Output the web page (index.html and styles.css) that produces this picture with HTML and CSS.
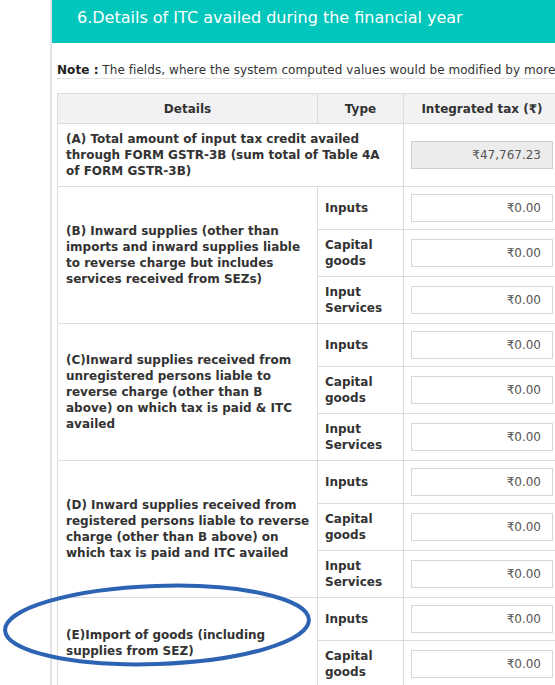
FILE: index.html
```html
<!DOCTYPE html>
<html lang="en">
<head>
  <meta charset="UTF-8">
  <title>GSTR-9 Table 6</title>
  <link rel="stylesheet" href="styles.css">
</head>
<body>
  <div class="itc-section">
    <div class="itc-head">
      <h4>6.Details of ITC availed during the financial year</h4>
    </div>
    <div class="itc-body">
      <p class="itc-note"><strong>Note :</strong> The fields, where the system computed values would be modified by more than 20% would be highlighted in red colour.</p>
      <table class="itc-table">
        <thead>
          <tr>
            <th class="col-details">Details</th>
            <th class="col-type">Type</th>
            <th class="col-amt">Integrated tax (&#8377;)</th>
            <th class="col-amt">Central tax (&#8377;)</th>
            <th class="col-amt">State/UT tax (&#8377;)</th>
            <th class="col-amt">Cess (&#8377;)</th>
          </tr>
        </thead>
        <tbody>
          <!-- A -->
          <tr>
            <td colspan="2" class="row-a">(A) Total amount of input tax credit availed through FORM GSTR-3B (sum total of Table 4A of FORM GSTR-3B)</td>
            <td><input class="amt amt-readonly" value="&#8377;47,767.23" readonly></td>
            <td><input class="amt amt-readonly" value="&#8377;47,767.23" readonly></td>
            <td><input class="amt amt-readonly" value="&#8377;47,767.23" readonly></td>
            <td><input class="amt amt-readonly" value="&#8377;0.00" readonly></td>
          </tr>
          <!-- B -->
          <tr>
            <td rowspan="3" class="row-label">(B) Inward supplies (other than imports and inward supplies liable to reverse charge but includes services received from SEZs)</td>
            <td class="type">Inputs</td>
            <td><input class="amt" value="&#8377;0.00"></td>
            <td><input class="amt" value="&#8377;0.00"></td>
            <td><input class="amt" value="&#8377;0.00"></td>
            <td><input class="amt" value="&#8377;0.00"></td>
          </tr>
          <tr>
            <td class="type">Capital goods</td>
            <td><input class="amt" value="&#8377;0.00"></td>
            <td><input class="amt" value="&#8377;0.00"></td>
            <td><input class="amt" value="&#8377;0.00"></td>
            <td><input class="amt" value="&#8377;0.00"></td>
          </tr>
          <tr>
            <td class="type">Input Services</td>
            <td><input class="amt" value="&#8377;0.00"></td>
            <td><input class="amt" value="&#8377;0.00"></td>
            <td><input class="amt" value="&#8377;0.00"></td>
            <td><input class="amt" value="&#8377;0.00"></td>
          </tr>
          <!-- C -->
          <tr>
            <td rowspan="3" class="row-label">(C)Inward supplies received from unregistered persons liable to reverse charge (other than B above) on which tax is paid &amp; ITC availed</td>
            <td class="type">Inputs</td>
            <td><input class="amt" value="&#8377;0.00"></td>
            <td><input class="amt" value="&#8377;0.00"></td>
            <td><input class="amt" value="&#8377;0.00"></td>
            <td><input class="amt" value="&#8377;0.00"></td>
          </tr>
          <tr>
            <td class="type">Capital goods</td>
            <td><input class="amt" value="&#8377;0.00"></td>
            <td><input class="amt" value="&#8377;0.00"></td>
            <td><input class="amt" value="&#8377;0.00"></td>
            <td><input class="amt" value="&#8377;0.00"></td>
          </tr>
          <tr>
            <td class="type">Input Services</td>
            <td><input class="amt" value="&#8377;0.00"></td>
            <td><input class="amt" value="&#8377;0.00"></td>
            <td><input class="amt" value="&#8377;0.00"></td>
            <td><input class="amt" value="&#8377;0.00"></td>
          </tr>
          <!-- D -->
          <tr>
            <td rowspan="3" class="row-label">(D) Inward supplies received from registered persons liable to reverse charge (other than B above) on which tax is paid and ITC availed</td>
            <td class="type">Inputs</td>
            <td><input class="amt" value="&#8377;0.00"></td>
            <td><input class="amt" value="&#8377;0.00"></td>
            <td><input class="amt" value="&#8377;0.00"></td>
            <td><input class="amt" value="&#8377;0.00"></td>
          </tr>
          <tr>
            <td class="type">Capital goods</td>
            <td><input class="amt" value="&#8377;0.00"></td>
            <td><input class="amt" value="&#8377;0.00"></td>
            <td><input class="amt" value="&#8377;0.00"></td>
            <td><input class="amt" value="&#8377;0.00"></td>
          </tr>
          <tr>
            <td class="type">Input Services</td>
            <td><input class="amt" value="&#8377;0.00"></td>
            <td><input class="amt" value="&#8377;0.00"></td>
            <td><input class="amt" value="&#8377;0.00"></td>
            <td><input class="amt" value="&#8377;0.00"></td>
          </tr>
          <!-- E -->
          <tr>
            <td rowspan="2" class="row-label">(E)Import of goods (including supplies from SEZ)</td>
            <td class="type">Inputs</td>
            <td><input class="amt" value="&#8377;0.00"></td>
            <td><input class="amt" value="&#8377;0.00"></td>
            <td><input class="amt" value="&#8377;0.00"></td>
            <td><input class="amt" value="&#8377;0.00"></td>
          </tr>
          <tr>
            <td class="type">Capital goods</td>
            <td><input class="amt" value="&#8377;0.00"></td>
            <td><input class="amt" value="&#8377;0.00"></td>
            <td><input class="amt" value="&#8377;0.00"></td>
            <td><input class="amt" value="&#8377;0.00"></td>
          </tr>
        </tbody>
      </table>
    </div>
  </div>

  <!-- hand-drawn highlight over row E -->
  <svg class="mark" width="555" height="685" viewBox="0 0 555 685" aria-hidden="true">
    <ellipse cx="157" cy="625" rx="152" ry="39" transform="rotate(-2 157 625)" fill="none" stroke="#2d63b3" stroke-width="4"/>
  </svg>
</body>
</html>
```

FILE: styles.css
```css
html, body { overflow: hidden; }
body {
  margin: 0;
  background: #fff;
  font-family: 'DejaVu Sans', Verdana, sans-serif;
  color: #333;
}
.itc-section {
  margin-left: 50px;
  border-left: 2px solid #dfe4ea;
  min-height: 685px;
  width: 990px;
}
.itc-head {
  background: #00c6bb;
  height: 43px;
  padding-left: 25px;
  display: flex;
  align-items: center;
}
.itc-head h4 {
  margin: 0 0 8px 0;
  color: #fff;
  font-size: 16px;
  font-weight: 400;
  white-space: nowrap;
}
.itc-body {
  padding: 20px 0 0 5px;
}
.itc-note {
  margin: 0 0 14px 0;
  font-size: 12px;
  line-height: 15px;
  letter-spacing: 0.06px;
  white-space: nowrap;
  border-bottom: 1px solid #e3e3e3;
  color: #333;
}
.itc-note strong { color: #222; }

.itc-table {
  border-collapse: collapse;
  table-layout: fixed;
  width: 974px;
  font-size: 12px;
  border: 1px solid #dcdcdc;
}
.itc-table th,
.itc-table td {
  box-sizing: border-box;
  border: 1px solid #dcdcdc;
}
.itc-table th {
  background: #f2f2f4;
  height: 30px;
  padding: 0 7px;
  font-weight: 700;
  color: #333;
  text-align: center;
  white-space: nowrap;
}
.col-details { width: 260px; }
.col-type { width: 86px; }
.col-amt { width: 157px; }

.itc-table td {
  padding: 7px 7px;
  line-height: 16px;
  font-weight: 700;
  color: #333;
  vertical-align: middle;
}
.itc-table td.row-a {
  padding-left: 8px;
  padding-right: 10px;
}
.itc-table td.row-label {
  padding-left: 8px;
  padding-right: 6px;
}
.itc-table td.type { padding-left: 7px; }

.amt {
  box-sizing: border-box;
  display: block;
  width: 100%;
  height: 28px;
  border: 1px solid #d6d6d6;
  background: #fff;
  padding: 0 11px;
  text-align: right;
  font-family: 'DejaVu Sans', Verdana, sans-serif;
  font-size: 12px;
  color: #555;
  outline: none;
}
.amt-readonly {
  background: #ececec;
  border-color: #cfcfcf;
}

.mark {
  position: absolute;
  left: 0;
  top: 0;
  pointer-events: none;
}
```
